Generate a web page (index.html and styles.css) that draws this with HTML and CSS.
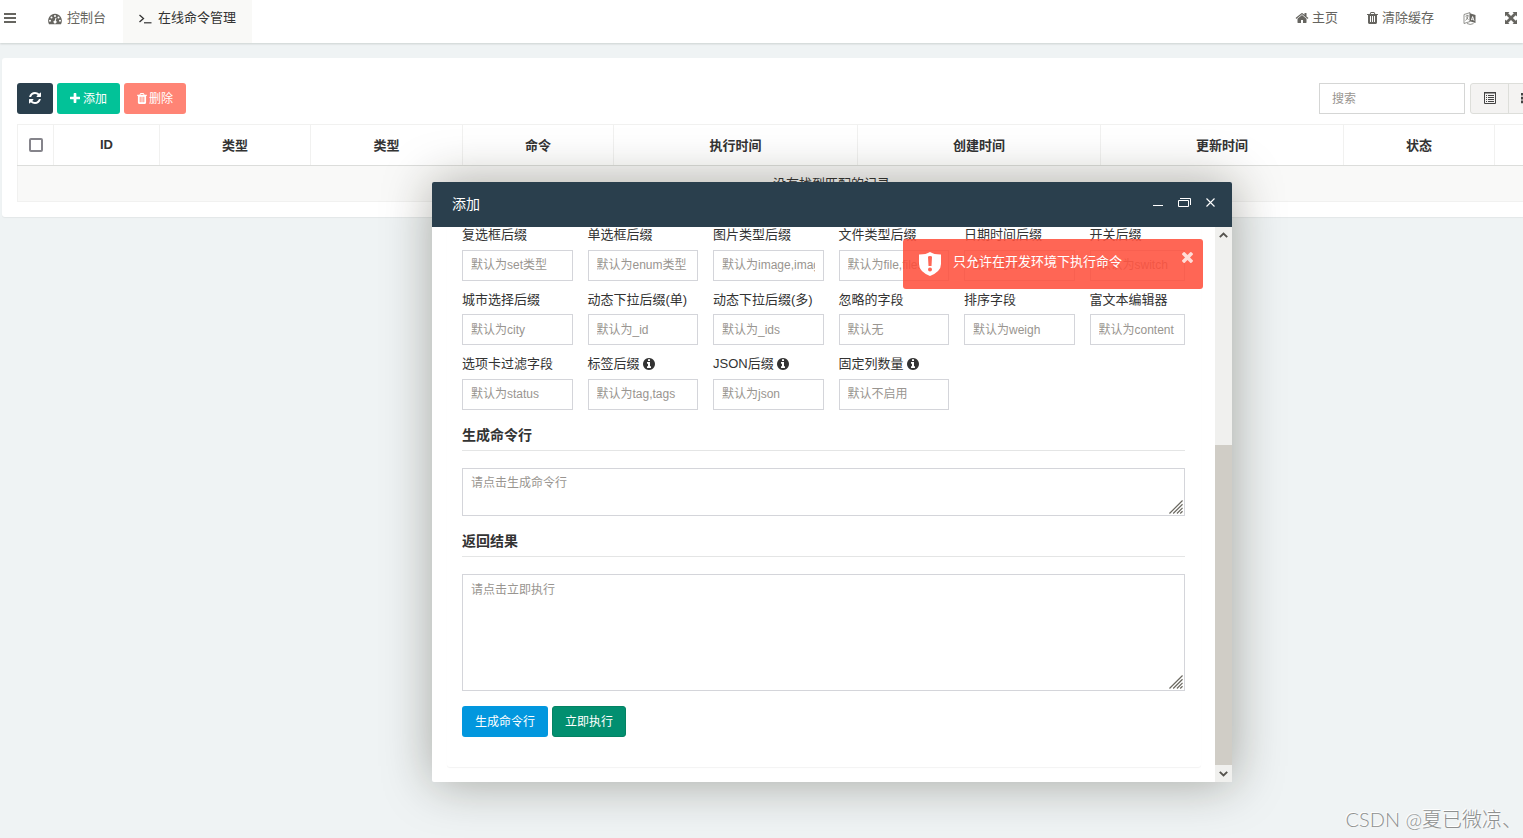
FILE: index.html
```
<!DOCTYPE html>
<html lang="zh-CN">
<head>
    <meta charset="UTF-8">
    <meta name="viewport" content="width=device-width, initial-scale=1.0">
    <title>在线命令管理</title>
    <link rel="stylesheet" href="styles.css">
</head>
<body>
    <svg class="sprite">
        <symbol id="i-bars" viewBox="0 0 12 12"><path d="M0 1h12v2H0zM0 5h12v2H0zM0 9h12v2H0z"/></symbol>
        <symbol id="i-dash" viewBox="0 0 14 12"><path fill-rule="evenodd" d="M7 .8a7 7 0 0 1 6 10.400H1A7 7 0 0 1 7 .8zM7 2a1 1 0 1 0 0 2 1 1 0 0 0 0-2zM3.500 3.400a1 1 0 1 0 0 2 1 1 0 0 0 0-2zM10.500 3.400a1 1 0 1 0 0 2 1 1 0 0 0 0-2zM2 6.800a1 1 0 1 0 0 2 1 1 0 0 0 0-2zM12 6.800a1 1 0 1 0 0 2 1 1 0 0 0 0-2zM7.500 4.800L6.800 7.500a1.500 1.500 0 1 0 1 .2l.7-2.700z"/></symbol>
        <symbol id="i-terminal" viewBox="0 0 13 12"><path d="M1 2l4 3.500L1 9" fill="none" stroke="currentColor" stroke-width="1.300"/><path d="M5.500 9.200h7.500v1.200H5.500z"/></symbol>
        <symbol id="i-home" viewBox="0 0 1792 1792"><path d="M1472 992v480q0 26-19 45t-45 19h-384v-384h-256v384h-384q-26 0-45-19t-19-45v-480q0-1 .5-3t.5-3l575-474 575 474q1 2 1 6zm223-69l-62 74q-8 9-21 11h-3q-13 0-21-7l-692-577-692 577q-12 8-24 7-13-2-21-11l-62-74q-8-10-7-23.500t11-21.500l719-599q32-26 76-26t76 26l244 204v-195q0-14 9-23t23-9h192q14 0 23 9t9 23v408l219 182q10 8 11 21.500t-7 23.500z"/></symbol>
        <symbol id="i-trash" viewBox="192 128 1408 1536"><path d="M704 1376v-704q0-14-9-23t-23-9h-64q-14 0-23 9t-9 23v704q0 14 9 23t23 9h64q14 0 23-9t9-23zm256 0v-704q0-14-9-23t-23-9h-64q-14 0-23 9t-9 23v704q0 14 9 23t23 9h64q14 0 23-9t9-23zm256 0v-704q0-14-9-23t-23-9h-64q-14 0-23 9t-9 23v704q0 14 9 23t23 9h64q14 0 23-9t9-23zm-544-992h448l-48-117q-7-9-17-11h-317q-10 2-17 11zm928 32v64q0 14-9 23t-23 9h-96v948q0 83-47 143.500t-113 60.500h-832q-66 0-113-58.500t-47-141.500v-952h-96q-14 0-23-9t-9-23v-64q0-14 9-23t23-9h309l70-167q15-37 54-63t79-26h320q40 0 79 26t54 63l70 167h309q14 0 23 9t9 23z"/></symbol>
        <symbol id="i-lang" viewBox="0 0 12 13"><path d="M.5 2.500L6.500.6v8.900L.5 11.500z" fill="none" stroke="currentColor" stroke-width=".7"/><path d="M2 4.300l3-.9M3.500 2.800v1M4.700 3.800Q4 7 2 8.500M2.500 5.500l2.500 2" fill="none" stroke="currentColor" stroke-width=".7"/><path fill-rule="evenodd" d="M6.300 1.200L12 3v8l-5.700-1.800zM8.700 4.200L7.500 8l.8.300.3-.9 1.300.4.300 1 .8.300-1.400-4.600zM9.100 5.400l.5 1.500-.9-.3z"/><path d="M3.500 11.500q3 1.800 6.500.1" fill="none" stroke="currentColor" stroke-width=".7"/></symbol>
        <symbol id="i-full" viewBox="0 0 12 12"><path d="M0 0h4.500L3.200 1.300 6 4.100l2.800-2.800L7.500 0H12v4.500l-1.300-1.300L7.900 6l2.800 2.800L12 7.500V12H7.500l1.300-1.300L6 7.900l-2.800 2.800L4.500 12H0V7.500l1.300 1.300L4.100 6 1.300 3.200 0 4.500z"/></symbol>
        <symbol id="i-refresh" viewBox="128 128 1536 1536"><path d="M1639 1056q0 5-1 7-64 268-268 434.500t-478 166.500q-146 0-282.500-55t-243.500-157l-129 129q-19 19-45 19t-45-19-19-45v-448q0-26 19-45t45-19h448q26 0 45 19t19 45-19 45l-137 137q71 66 161 102t187 36q134 0 250-65t186-179q11-17 53-117 8-23 30-23h192q13 0 22.500 9.500t9.500 22.500zm25-800v448q0 26-19 45t-45 19h-448q-26 0-45-19t-19-45 19-45l138-138q-148-137-349-137-134 0-250 65t-186 179q-11 17-53 117-8 23-30 23h-199q-13 0-22.500-9.500t-9.500-22.500v-7q65-268 270-434.500t480-166.500q146 0 284 55.500t245 156.500l130-129q19-19 45-19t45 19 19 45z"/></symbol>
        <symbol id="i-plus" viewBox="192 128 1408 1408"><path d="M1600 736v192q0 40-28 68t-68 28h-416v416q0 40-28 68t-68 28h-192q-40 0-68-28t-28-68v-416h-416q-40 0-68-28t-28-68v-192q0-40 28-68t68-28h416v-416q0-40 28-68t68-28h192q40 0 68 28t28 68v416h416q40 0 68 28t28 68z"/></symbol>
        <symbol id="i-info" viewBox="128 128 1536 1536"><path d="M1152 1376v-160q0-14-9-23t-23-9h-96v-512q0-14-9-23t-23-9h-320q-14 0-23 9t-9 23v160q0 14 9 23t23 9h96v320h-96q-14 0-23 9t-9 23v160q0 14 9 23t23 9h448q14 0 23-9t9-23zm-128-896v-160q0-14-9-23t-23-9h-192q-14 0-23 9t-9 23v160q0 14 9 23t23 9h192q14 0 23-9t9-23zm640 416q0 209-103 385.500t-279.500 279.500-385.500 103-385.500-103-279.500-279.500-103-385.500 103-385.500 279.500-279.500 385.500-103 385.500 103 279.500 279.500 103 385.500z"/></symbol>
        <symbol id="i-close" viewBox="302 366 1188 1188"><path d="M1490 1322q0 40-28 68l-136 136q-28 28-68 28t-68-28l-294-294-294 294q-28 28-68 28t-68-28l-136-136q-28-28-28-68t28-68l294-294-294-294q-28-28-28-68t28-68l136-136q28-28 68-28t68 28l294 294 294-294q28-28 68-28t68 28l136 136q28 28 28 68t-28 68l-294 294 294 294q28 28 28 68z"/></symbol>
        <symbol id="i-list" viewBox="0 0 12 12"><path d="M.5 .5h11v11H.5z" fill="none" stroke="currentColor"/><path d="M0 0h12v1.600H0zM2 3h1v1H2zM4 3h6v1H4zM2 5h1v1H2zM4 5h6v1H4zM2 7h1v1H2zM4 7h6v1H4zM2 9h1v1H2zM4 9h6v1H4z"/></symbol>
        <symbol id="i-th" viewBox="0 0 12 12"><path d="M0 1h3v2.600H0zM4.500 1h3v2.600h-3zM9 1h3v2.600H9zM0 4.800h3v2.600H0zM4.500 4.800h3v2.600h-3zM9 4.800h3v2.600H9zM0 8.600h3v2.600H0zM4.500 8.600h3v2.600h-3zM9 8.600h3v2.600H9z"/></symbol>
        <symbol id="i-grip" viewBox="0 0 15 15"><path d="M.5 14.500l14-14M4.500 14.500l10-10M8.500 14.500l6-6M12 14.500l2.500-2.500" fill="none" stroke="#6b6961" stroke-width="1.300"/></symbol>
        <symbol id="i-shield" viewBox="0 0 22 24"><path fill-rule="evenodd" d="M11 0q4 2.600 11 2.500V12q0 7.500-11 12Q0 19.500 0 12V2.500Q7 2.600 11 0zM9 5l.5 9h3l.5-9q0-1-2-1t-2 1zM11 15.500a2 2 0 1 0 0 4 2 2 0 0 0 0-4z"/></symbol>
        <symbol id="i-up" viewBox="0 0 9 6"><path d="M.8 5.200L4.500 1.500l3.700 3.700" fill="none" stroke="#55534e" stroke-width="1.900"/></symbol>
    </svg>

    <header class="navbar">
        <a class="toggle"><svg class="icon"><use href="#i-bars"/></svg></a>
        <a class="tab"><svg class="icon icon-dash"><use href="#i-dash"/></svg>控制台</a>
        <a class="tab active"><svg class="icon icon-term"><use href="#i-terminal"/></svg>在线命令管理</a>
        <nav class="nav-right">
            <a><svg class="icon icon-home"><use href="#i-home"/></svg>主页</a>
            <a><svg class="icon icon-trash"><use href="#i-trash"/></svg>清除缓存</a>
            <a><svg class="icon icon-lang"><use href="#i-lang"/></svg></a>
            <a><svg class="icon"><use href="#i-full"/></svg></a>
        </nav>
    </header>

    <main class="panel">
        <div class="toolbar">
            <button class="btn btn-primary"><svg class="icon"><use href="#i-refresh"/></svg></button>
            <button class="btn btn-success"><svg class="icon icon-plus"><use href="#i-plus"/></svg>添加</button>
            <button class="btn btn-danger"><svg class="icon icon-del"><use href="#i-trash"/></svg>删除</button>
            <input class="search" type="text" placeholder="搜索">
            <div class="btn-group">
                <span class="tool"><svg class="icon"><use href="#i-list"/></svg></span>
                <span class="tool"><svg class="icon"><use href="#i-th"/></svg></span>
            </div>
        </div>
        <table class="table">
            <colgroup>
                <col class="c-check"><col class="c-id"><col class="c-type"><col class="c-type2"><col class="c-type"><col class="c-time2"><col class="c-time"><col class="c-time"><col class="c-type"><col class="c-type">
            </colgroup>
            <thead>
                <tr>
                    <th><span class="checkbox"></span></th>
                    <th>ID</th>
                    <th>类型</th>
                    <th>类型</th>
                    <th>命令</th>
                    <th>执行时间</th>
                    <th>创建时间</th>
                    <th>更新时间</th>
                    <th>状态</th>
                    <th></th>
                </tr>
            </thead>
            <tbody>
                <tr><td colspan="10">没有找到匹配的记录</td></tr>
            </tbody>
        </table>
    </main>

    <div class="layer">
        <div class="layer-title">
            <span>添加</span>
            <div class="layer-tools">
                <i class="win-min"></i>
                <svg class="win-max" viewBox="0 0 13 9"><path d="M.5 2.500h10v6H.5zM2 .5h10.500V7" fill="none" stroke="#fff"/></svg>
                <svg class="win-close" viewBox="0 0 9 9"><path d="M.5 .5l8 8M8.500 .5l-8 8" fill="none" stroke="#fff" stroke-width="1.100"/></svg>
            </div>
        </div>
        <div class="layer-body">
            <div class="form-panel">
                <div class="fields">
                    <div class="field"><label>复选框后缀</label><input type="text" placeholder="默认为set类型"></div>
                    <div class="field"><label>单选框后缀</label><input type="text" placeholder="默认为enum类型"></div>
                    <div class="field"><label>图片类型后缀</label><input type="text" placeholder="默认为image,images"></div>
                    <div class="field"><label>文件类型后缀</label><input type="text" placeholder="默认为file,files"></div>
                    <div class="field"><label>日期时间后缀</label><input type="text" placeholder="默认为time"></div>
                    <div class="field"><label>开关后缀</label><input type="text" placeholder="默认为switch"></div>
                    <div class="field"><label>城市选择后缀</label><input type="text" placeholder="默认为city"></div>
                    <div class="field"><label>动态下拉后缀(单)</label><input type="text" placeholder="默认为_id"></div>
                    <div class="field"><label>动态下拉后缀(多)</label><input type="text" placeholder="默认为_ids"></div>
                    <div class="field"><label>忽略的字段</label><input type="text" placeholder="默认无"></div>
                    <div class="field"><label>排序字段</label><input type="text" placeholder="默认为weigh"></div>
                    <div class="field"><label>富文本编辑器</label><input type="text" placeholder="默认为content"></div>
                    <div class="field"><label>选项卡过滤字段</label><input type="text" placeholder="默认为status"></div>
                    <div class="field"><label>标签后缀 <svg class="icon icon-info"><use href="#i-info"/></svg></label><input type="text" placeholder="默认为tag,tags"></div>
                    <div class="field"><label>JSON后缀 <svg class="icon icon-info"><use href="#i-info"/></svg></label><input type="text" placeholder="默认为json"></div>
                    <div class="field"><label>固定列数量 <svg class="icon icon-info"><use href="#i-info"/></svg></label><input type="text" placeholder="默认不启用"></div>
                </div>
                <h4 class="legend">生成命令行</h4>
                <div class="area area-command">
                    <textarea placeholder="请点击生成命令行"></textarea>
                    <svg class="grip"><use href="#i-grip"/></svg>
                </div>
                <h4 class="legend">返回结果</h4>
                <div class="area area-result">
                    <textarea placeholder="请点击立即执行"></textarea>
                    <svg class="grip"><use href="#i-grip"/></svg>
                </div>
                <div class="actions">
                    <button class="btn btn-info">生成命令行</button>
                    <button class="btn btn-execute">立即执行</button>
                </div>
            </div>
            <div class="scrollbar">
                <svg class="arrow"><use href="#i-up"/></svg>
                <div class="track"><div class="thumb"></div></div>
                <svg class="arrow arrow-down"><use href="#i-up"/></svg>
            </div>
        </div>
    </div>

    <div class="toast">
        <svg class="toast-icon"><use href="#i-shield"/></svg>
        <span>只允许在开发环境下执行命令</span>
        <svg class="toast-close"><use href="#i-close"/></svg>
    </div>

    <div class="watermark">CSDN @夏已微凉、</div>
</body>
</html>
```
FILE: styles.css
```
* {
    box-sizing: border-box;
}
body {
    margin: 0;
    height: 838px;
    overflow: hidden;
    background: #eff3f4;
    color: #333;
    font-family: "Liberation Sans", "Noto Sans CJK SC", sans-serif;
    font-size: 13px;
}
input, textarea, button {
    font-family: inherit;
    font-size: 12px;
}
.sprite {
    display: none;
}
.icon {
    width: 12px;
    height: 12px;
    flex: none;
    fill: currentColor;
}

/* top bar */
.navbar {
    display: flex;
    height: 43px;
    background: #fff;
    box-shadow: 0 1px 2px rgba(0, 21, 10, 0.15);
    color: #666560;
    line-height: 36px;
}
.navbar a {
    display: flex;
    align-items: center;
    height: 36px;
    white-space: nowrap;
}
.navbar .toggle {
    width: 33px;
    padding-left: 4px;
}
.navbar .tab {
    height: 43px;
    padding: 0 15px 7px;
}
.navbar .active {
    width: 129px;
    background: #f9f9f7;
    color: #333;
}
.navbar .tab:nth-child(2) {
    width: 90px;
}
.icon-dash {
    width: 14px;
    margin-right: 5px;
    margin-top: 1px;
}
.icon-term {
    width: 14px;
    margin-right: 6px;
    margin-top: 1px;
}
.nav-right {
    display: flex;
    gap: 29px;
    margin-left: auto;
    padding-right: 6px;
}
.icon-home {
    width: 14px;
    height: 14px;
    margin-right: 3px;
}
.icon-trash {
    width: 11px;
    margin-right: 4px;
}
.icon-lang {
    width: 13px;
    height: 13px;
}

/* list */
.panel {
    margin: 15px 0 0 2px;
    height: 159px;
    padding: 25px 0 0 15px;
    overflow: hidden;
    background: #fff;
    border-radius: 3px 0 0 3px;
    box-shadow: 0 1px 1px rgba(0, 0, 0, 0.05);
}
.toolbar {
    display: flex;
    width: 1546px;
    height: 31px;
    margin-bottom: 10px;
}
.btn {
    display: flex;
    align-items: center;
    justify-content: center;
    height: 31px;
    padding: 0 0 2px;
    margin-right: 4px;
    border: 0;
    border-radius: 3px;
    color: #fff;
}
.btn .icon {
    margin-top: 1px;
}
.btn-primary {
    width: 36px;
    background: #2a3f4d;
}
.btn-success {
    width: 63px;
    background: #02c298;
}
.btn-danger {
    width: 62px;
    background: #ff8475;
}
.icon-plus {
    width: 10px;
    height: 10px;
    margin-right: 3px;
}
.icon-del {
    width: 10px;
    height: 11px;
    margin-right: 2px;
}
.search {
    width: 146px;
    height: 31px;
    margin-left: auto;
    margin-right: 5px;
    padding: 0 12px;
    border: 1px solid #d5d6d5;
    outline: 0;
}
::placeholder {
    color: #999590;
    opacity: 1;
}
.btn-group {
    display: flex;
    width: 93px;
    border: 1px solid #dddeda;
    border-radius: 3px;
    background: #f4f3f2;
    color: #444;
}
.tool {
    display: flex;
    align-items: center;
    width: 38px;
    padding: 0 0 1px 13px;
    border-right: 1px solid #dddeda;
}
.tool:last-child {
    border-right: 0;
    padding-left: 12px;
}
.table {
    width: 1628px;
    table-layout: fixed;
    border-collapse: collapse;
    border: 1px solid #f1f1f0;
}
.c-check { width: 36px; }
.c-id { width: 106px; }
.c-type { width: 151px; }
.c-type2 { width: 152px; }
.c-time { width: 243px; }
.c-time2 { width: 244px; }
.table th {
    height: 41px;
    padding: 0 0 1px;
    border: 1px solid #f1f1f0;
    border-bottom: 1px solid #dcdddb;
}
.table td {
    height: 36px;
    padding: 0 0 3px;
    background: #f9f9f8;
    text-align: center;
}
.checkbox {
    display: block;
    width: 14px;
    height: 14px;
    margin: 0 auto;
    border: 2px solid #85848b;
    border-radius: 2px;
}

/* dialog */
.layer {
    position: absolute;
    left: 432px;
    top: 182px;
    width: 800px;
    height: 600px;
    background: #fff;
    border-radius: 2px;
    box-shadow: 1px 1px 50px rgba(30, 28, 10, 0.36);
}
.layer-title {
    display: flex;
    justify-content: space-between;
    height: 45px;
    padding: 0 17px 0 20px;
    border-radius: 2px 2px 0 0;
    background: #2a3f4d;
    color: #fff;
    font-size: 14px;
    line-height: 44px;
}
.layer-tools {
    display: flex;
    align-items: center;
    height: 41px;
}
.win-min {
    width: 10px;
    height: 1px;
    margin: 6px 15px 0 0;
    background: #fff;
}
.win-max {
    width: 13px;
    height: 9px;
    margin-right: 15px;
}
.win-close {
    width: 9px;
    height: 9px;
}
.layer-body {
    display: flex;
    height: 555px;
    overflow: hidden;
}
.form-panel {
    width: 754px;
    height: 540px;
    margin: 0 14px 0 15px;
    padding: 0 15px;
    border-radius: 0 0 3px 3px;
    box-shadow: 0 1px 1px rgba(0, 0, 0, 0.05);
}
.fields {
    display: grid;
    grid-template-columns: repeat(5, 110.5px) 95.5px;
    column-gap: 15px;
    row-gap: 9.5px;
    margin-top: -1.2px;
    width: 723px;
}
.field label {
    display: flex;
    align-items: center;
    height: 19px;
    margin-bottom: 5px;
    padding-bottom: 3px;
    white-space: pre;
}
.icon-info {
    margin-top: 2px;
}
.field input {
    display: block;
    width: 100%;
    height: 31px;
    padding: 0 8px;
    border: 1px solid #d4d5da;
    outline: 0;
}
.legend {
    width: 723px;
    height: 26px;
    margin: 15px 0 17px;
    border-bottom: 1px solid #e4e5e5;
    font-size: 14px;
    line-height: 20px;
}
.fields + .legend {
    margin-top: 15.2px;
}
.area {
    position: relative;
    width: 723px;
}
.area textarea {
    display: block;
    width: 100%;
    height: 100%;
    padding: 6px 8px;
    border: 1px solid #d4d5da;
    outline: 0;
    resize: none;
    line-height: 17px;
}
.area-command {
    height: 48px;
}
.area-result {
    height: 117px;
}
.area-result textarea {
    padding-top: 7px;
}
.grip {
    position: absolute;
    right: 2px;
    bottom: 2px;
    width: 14px;
    height: 14px;
}
.actions {
    display: flex;
    margin-top: 15px;
}
.btn-info {
    width: 86px;
    background: #0297de;
}
.btn-execute {
    width: 74px;
    background: #028f70;
    border: 1px solid #048263;
}
.scrollbar {
    display: flex;
    flex-direction: column;
    width: 17px;
    background: #f0f0ee;
}
.arrow {
    width: 9px;
    height: 6px;
    margin: 5px 4px 6px;
}
.arrow-down {
    transform: rotate(180deg);
    margin: 6px 4px 5px;
}
.track {
    display: flex;
    flex: 1;
    align-items: flex-end;
}
.thumb {
    width: 17px;
    height: 320px;
    background: #d0cdc6;
}

/* message */
.toast {
    position: absolute;
    left: 903px;
    top: 239px;
    display: flex;
    width: 300px;
    height: 50px;
    padding: 13px 10px 0 16px;
    border-radius: 3px;
    background: rgba(255, 77, 57, 0.86);
    color: #fff;
    line-height: 20px;
}
.toast-icon {
    width: 22px;
    height: 24px;
    margin-right: 12px;
    fill: #fff;
}
.toast-close {
    width: 11px;
    height: 11px;
    margin-left: auto;
    fill: #ffddd8;
}

.watermark {
    position: absolute;
    right: 1px;
    bottom: 4px;
    color: #8e908f;
    font-family: Lato, "Noto Sans CJK SC", sans-serif;
    font-size: 20px;
    font-weight: 300;
    line-height: 30px;
    text-shadow: -1px -1px 0 #fff;
}
```
